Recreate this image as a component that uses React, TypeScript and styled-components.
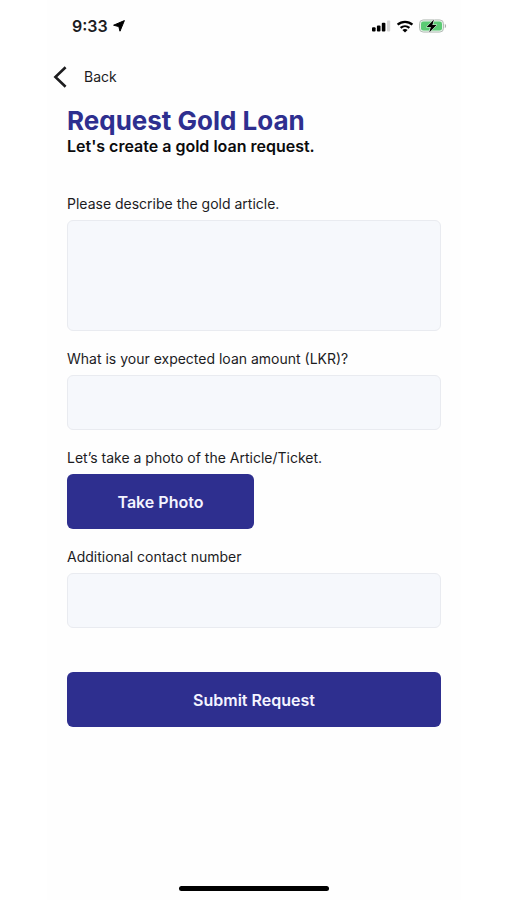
import React from "react";
import styled, { createGlobalStyle } from "styled-components";

const GlobalStyle = createGlobalStyle`
  *, *::before, *::after { box-sizing: border-box; }
  body {
    margin: 0;
    background: #ffffff;
    color: #1c1c1e;
    font-family: Inter, "Liberation Sans", sans-serif;
  }
`;

const Screen = styled.div`
  display: flex;
  flex-direction: column;
  min-height: 100vh;
  margin: 0 46px 0 47px;
  background: #fefefe;
`;

const StatusBar = styled.header`
  display: flex;
  align-items: center;
  justify-content: space-between;
  height: 52px;
  padding: 0 14px 0 25px;
`;

const StatusGroup = styled.div<{ $gap: number }>`
  display: flex;
  align-items: center;
  gap: ${({ $gap }) => $gap}px;
`;

const Clock = styled.time`
  font-size: 16px;
  line-height: 20px;
  font-weight: 600;
`;

const BackButton = styled.button`
  display: flex;
  align-items: center;
  align-self: flex-start;
  gap: 16px;
  height: 50px;
  padding: 0 6px;
  border: 0;
  background: none;
  color: #1c1c1e;
  font: inherit;
  font-size: 14px;
  line-height: 20px;
  cursor: pointer;
`;

const Main = styled.main`
  flex: 1;
  padding: 4px 20px 24px;
`;

const Title = styled.h1`
  margin: 0;
  color: #2e2f8f;
  font-size: 26px;
  line-height: 30px;
  font-weight: 700;
`;

const Subtitle = styled.p`
  margin: 0;
  color: #0b0b0d;
  font-size: 16px;
  line-height: 20px;
  font-weight: 600;
`;

const Form = styled.form`
  display: flex;
  flex-direction: column;
  gap: 18px;
  margin-top: 38px;
`;

const Field = styled.div`
  display: flex;
  flex-direction: column;
  gap: 6px;
`;

const Label = styled.label`
  font-size: 14px;
  line-height: 20px;
`;

const Input = styled.input`
  width: 100%;
  height: 55px;
  padding: 0 16px;
  border: 1px solid #e9ebf0;
  border-radius: 6px;
  background: #f6f8fc;
  font: inherit;
  font-size: 14px;
`;

const TextArea = styled.textarea`
  display: block;
  width: 100%;
  height: 111px;
  padding: 16px;
  border: 1px solid #e9ebf0;
  border-radius: 6px;
  background: #f6f8fc;
  font: inherit;
  font-size: 14px;
  resize: none;
`;

const Button = styled.button<{ $half?: boolean }>`
  width: ${({ $half }) => ($half ? "50%" : "100%")};
  height: 55px;
  border: 0;
  border-radius: 6px;
  background: #2e2f8f;
  color: #f4f4ff;
  font: inherit;
  font-size: 16px;
  line-height: 20px;
  font-weight: 600;
  cursor: pointer;
`;

const SubmitRow = styled.div`
  padding-top: 26px;
`;

const HomeIndicator = styled.div`
  align-self: center;
  width: 36%;
  height: 5px;
  margin-bottom: 9px;
  border-radius: 3px;
  background: #000000;
`;

const LocationIcon = () => (
  <svg width="12" height="12" viewBox="0 0 12 12" aria-hidden="true">
    <path d="M11.4 0.6 L7 11.2 L5.8 6.6 L0.6 5.2 Z" fill="#000" stroke="#000" strokeWidth="1" strokeLinejoin="round" />
  </svg>
);

const SignalIcon = () => (
  <svg width="19" height="12" viewBox="0 0 19 12" aria-hidden="true">
    <rect x="0" y="7.3" width="3.6" height="4.2" rx="1" fill="#000" />
    <rect x="4.9" y="5.6" width="3.6" height="5.9" rx="1" fill="#000" />
    <rect x="9.8" y="2.8" width="3.6" height="8.7" rx="1" fill="#000" />
    <rect x="15" y="0.4" width="3.2" height="11.1" rx="1" fill="#d6d6d6" />
  </svg>
);

const WifiIcon = () => (
  <svg width="18" height="13" viewBox="0 0 18 13" aria-hidden="true">
    <path d="M1.6 4.7 C5.8 0.8 12.2 0.8 16.4 4.7" fill="none" stroke="#000" strokeWidth="2.3" />
    <path d="M4.6 7.9 C7.1 5.7 10.9 5.7 13.4 7.9" fill="none" stroke="#000" strokeWidth="2.2" />
    <path d="M6.4 9.9 C7.9 8.7 10.1 8.7 11.6 9.9 L9 12.6 Z" fill="#000" />
  </svg>
);

const BatteryIcon = () => (
  <svg width="28" height="14" viewBox="0 0 28 14" aria-hidden="true">
    <rect x="0.5" y="0.9" width="24" height="12.2" rx="3.8" fill="#e4f1e7" stroke="#b5bdb7" />
    <rect x="2" y="2.4" width="21" height="9.2" rx="2.4" fill="#5bcb74" />
    <path d="M25.8 4.8 C27.6 5.5 27.6 8.5 25.8 9.2 Z" fill="#a9b0ab" />
    <path d="M15 0.6 L7.6 7.9 H11.8 L10.2 13.4 L17.6 6.1 H13.4 Z" fill="#000" stroke="#fff" strokeWidth="1" paintOrder="stroke" />
  </svg>
);

const ChevronIcon = () => (
  <svg width="15" height="22" viewBox="0 0 15 22" aria-hidden="true">
    <path d="M12.6 1.2 L2.4 11 L12.6 20.8" fill="none" stroke="#1c1c1e" strokeWidth="2.6" />
  </svg>
);

export default function App() {
  return (
    <>
      <GlobalStyle />
      <Screen>
        <StatusBar>
          <StatusGroup $gap={5}>
            <Clock>9:33</Clock>
            <LocationIcon />
          </StatusGroup>
          <StatusGroup $gap={5}>
            <SignalIcon />
            <WifiIcon />
            <BatteryIcon />
          </StatusGroup>
        </StatusBar>
        <BackButton type="button">
          <ChevronIcon />
          Back
        </BackButton>
        <Main>
          <Title>Request Gold Loan</Title>
          <Subtitle>Let's create a gold loan request.</Subtitle>
          <Form onSubmit={(event) => event.preventDefault()}>
            <Field>
              <Label htmlFor="article">Please describe the gold article.</Label>
              <TextArea id="article" name="article" />
            </Field>
            <Field>
              <Label htmlFor="amount">What is your expected loan amount (LKR)?</Label>
              <Input id="amount" name="amount" inputMode="decimal" />
            </Field>
            <Field>
              <Label htmlFor="photo">Let’s take a photo of the Article/Ticket.</Label>
              <Button id="photo" type="button" $half>Take Photo</Button>
            </Field>
            <Field>
              <Label htmlFor="contact">Additional contact number</Label>
              <Input id="contact" name="contact" type="tel" />
            </Field>
            <SubmitRow>
              <Button type="submit">Submit Request</Button>
            </SubmitRow>
          </Form>
        </Main>
        <HomeIndicator />
      </Screen>
    </>
  );
}
